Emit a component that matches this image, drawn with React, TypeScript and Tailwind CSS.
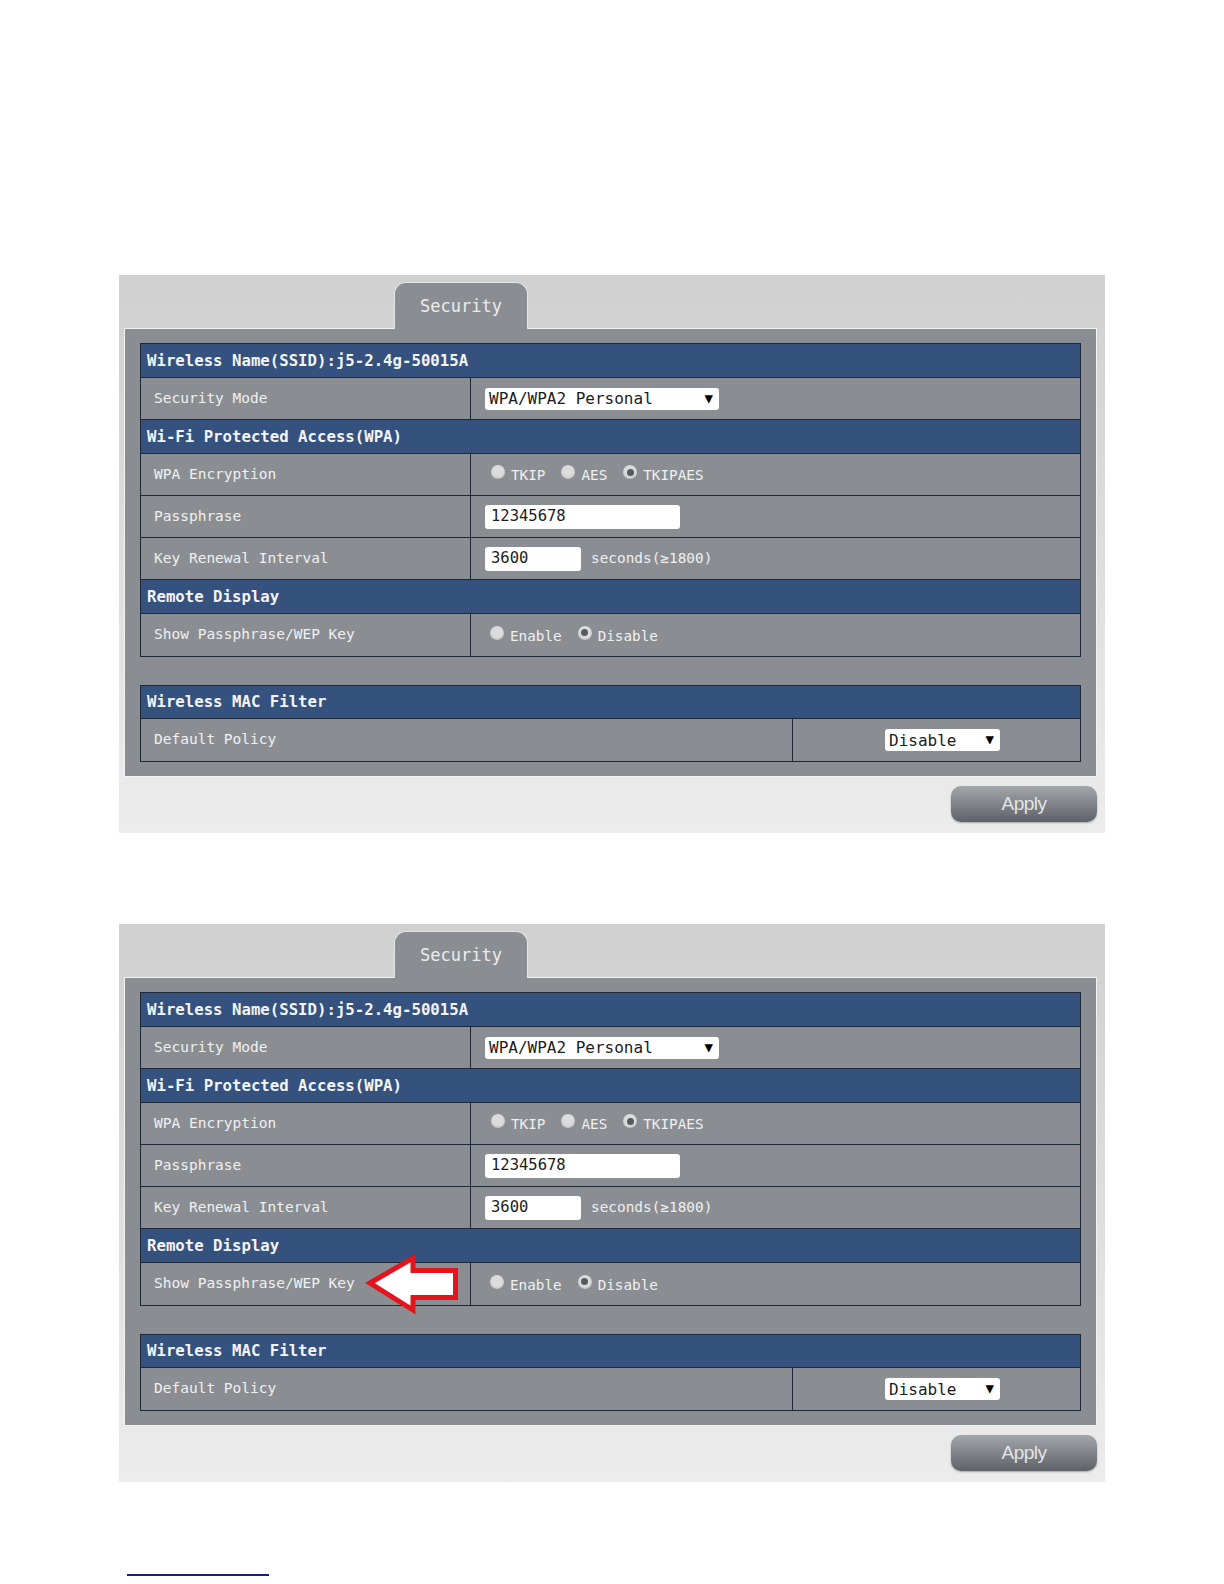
import React from "react";

const panelGray = "bg-[#8a8e93]";

function Header({ title }: { title: string }) {
  return (
    <div className="flex h-[34px] items-center border-b border-[#1f2836] bg-[#35527f] pl-[6px] text-[15.7px] font-bold text-[#f4f4f4]">
      {title}
    </div>
  );
}

function Row({
  label,
  children,
  last,
  arrow,
  labelWidth = "w-[330px]",
  center,
}: {
  label: string;
  children: React.ReactNode;
  last?: boolean;
  arrow?: boolean;
  labelWidth?: string;
  center?: boolean;
}) {
  return (
    <div
      className={
        "flex h-[42px] " + (last ? "" : "border-b border-[#1f2836]")
      }
    >
      <div
        className={
          labelWidth +
          " relative flex shrink-0 items-center border-r border-[#1f2836] pl-[13px] text-[14.5px] text-[#f0f0f0]"
        }
      >
        {label}
        {arrow && <RedArrow />}
      </div>
      <div
        className={
          "flex flex-1 items-center " + (center ? "justify-center pl-[12px]" : "pl-[14px]")
        }
      >
        {children}
      </div>
    </div>
  );
}

function RedArrow() {
  return (
    <svg
      className="absolute left-[220px] top-[-13px] z-10"
      width="100"
      height="66"
      viewBox="0 0 100 66"
    >
      <path
        d="M9 33 L52 8 L52 20.5 L94.5 20.5 L94.5 47.5 L52 47.5 L52 60 Z"
        fill="#ffffff"
        stroke="#e3141c"
        strokeWidth="5"
        strokeLinejoin="miter"
      />
    </svg>
  );
}

function Select({ value, width }: { value: string; width: string }) {
  return (
    <div
      className={
        width +
        " flex h-[22px] items-center justify-between rounded-[3px] bg-white pl-[4px] pr-[6px] text-[16px] text-[#1c1c1c]"
      }
    >
      <span className="mt-[1px]">{value}</span>
      <span className="mb-[2px] text-[14px] leading-none text-black">▼</span>
    </div>
  );
}

function Input({ value, width }: { value: string; width: string }) {
  return (
    <div
      className={
        width +
        " flex h-[24px] items-center rounded-[3px] bg-white pl-[6px] text-[15.5px] text-[#1c1c1c]"
      }
    >
      <span className="mt-[1px]">{value}</span>
    </div>
  );
}

function Radio({ label, checked, first }: { label: string; checked?: boolean; first?: boolean }) {
  return (
    <div className={"flex items-center " + (first ? "" : "ml-[16px]")}>
      <span className="mb-[5px] flex h-[14px] w-[14px] items-center justify-center rounded-full bg-[#dcdcdc] shadow-[inset_0_-1px_2px_rgba(0,0,0,0.15)]">
        {checked && <span className="h-[7px] w-[7px] rounded-full bg-[#555a60]" />}
      </span>
      <span className="ml-[6px] mt-[3px] text-[14.3px] text-[#f0f0f0]">{label}</span>
    </div>
  );
}

function SecurityPanel({ arrow }: { arrow?: boolean }) {
  return (
    <div className="ml-[119px] flex h-[558px] w-[986px] flex-col bg-[linear-gradient(180deg,#d0d0d0_0%,#dcdcdc_45%,#ececec_100%)]">
      <div className="flex h-[53px] items-end pl-[275px]">
        <div
          className={
            panelGray +
            " relative z-10 -mb-[1px] flex h-[47px] w-[134px] items-center justify-center rounded-t-[12px] border border-b-0 border-[#e6e6e6] pt-[1px] text-[17px] text-[#ececec]"
          }
        >
          Security
        </div>
      </div>
      <div className={panelGray + " ml-[5px] w-[973px] border border-[#f2f2f2] px-[15px] py-[14px]"}>
        <div className="border border-[#1f2836]">
          <Header title="Wireless Name(SSID):j5-2.4g-50015A" />
          <Row label="Security Mode">
            <Select value="WPA/WPA2 Personal" width="w-[234px]" />
          </Row>
          <Header title="Wi-Fi Protected Access(WPA)" />
          <Row label="WPA Encryption">
            <div className="ml-[6px] flex items-center">
              <Radio label="TKIP" first />
              <Radio label="AES" />
              <Radio label="TKIPAES" checked />
            </div>
          </Row>
          <Row label="Passphrase">
            <Input value="12345678" width="w-[195px]" />
          </Row>
          <Row label="Key Renewal Interval">
            <Input value="3600" width="w-[96px]" />
            <span className="ml-[10px] mt-[1px] text-[14.4px] text-[#f0f0f0]">seconds(≥1800)</span>
          </Row>
          <Header title="Remote Display" />
          <Row label="Show Passphrase/WEP Key" last arrow={arrow}>
            <div className="ml-[5px] flex items-center">
              <Radio label="Enable" first />
              <Radio label="Disable" checked />
            </div>
          </Row>
        </div>
        <div className="mt-[28px] border border-[#1f2836]">
          <div className="flex h-[33px] items-center border-b border-[#1f2836] bg-[#35527f] pl-[6px] text-[15.7px] font-bold text-[#f4f4f4]">
            Wireless MAC Filter
          </div>
          <Row label="Default Policy" last labelWidth="w-[652px]" center>
            <Select value="Disable" width="w-[115px]" />
          </Row>
        </div>
      </div>
      <div className="mr-[8px] mt-[9px] flex justify-end">
        <div className="flex h-[36px] w-[146px] items-center justify-center rounded-[10px] bg-[linear-gradient(180deg,#a3a7ac_0%,#80848a_50%,#5e6268_100%)] font-['Liberation_Sans',Arial,sans-serif] text-[19px] tracking-[-0.5px] text-[#e4e4e4] shadow-[0_1px_2px_rgba(0,0,0,0.3)]">
          Apply
        </div>
      </div>
    </div>
  );
}

export default function App() {
  return (
    <div className="min-h-[1584px] w-[1224px] bg-white pt-[275px] font-['DejaVu_Sans_Mono',monospace]">
      <SecurityPanel />
      <div className="mt-[91px]">
        <SecurityPanel arrow />
      </div>
      <div className="ml-[127px] mt-[92px] h-[2px] w-[142px] bg-[#1a1a8c]" />
    </div>
  );
}
